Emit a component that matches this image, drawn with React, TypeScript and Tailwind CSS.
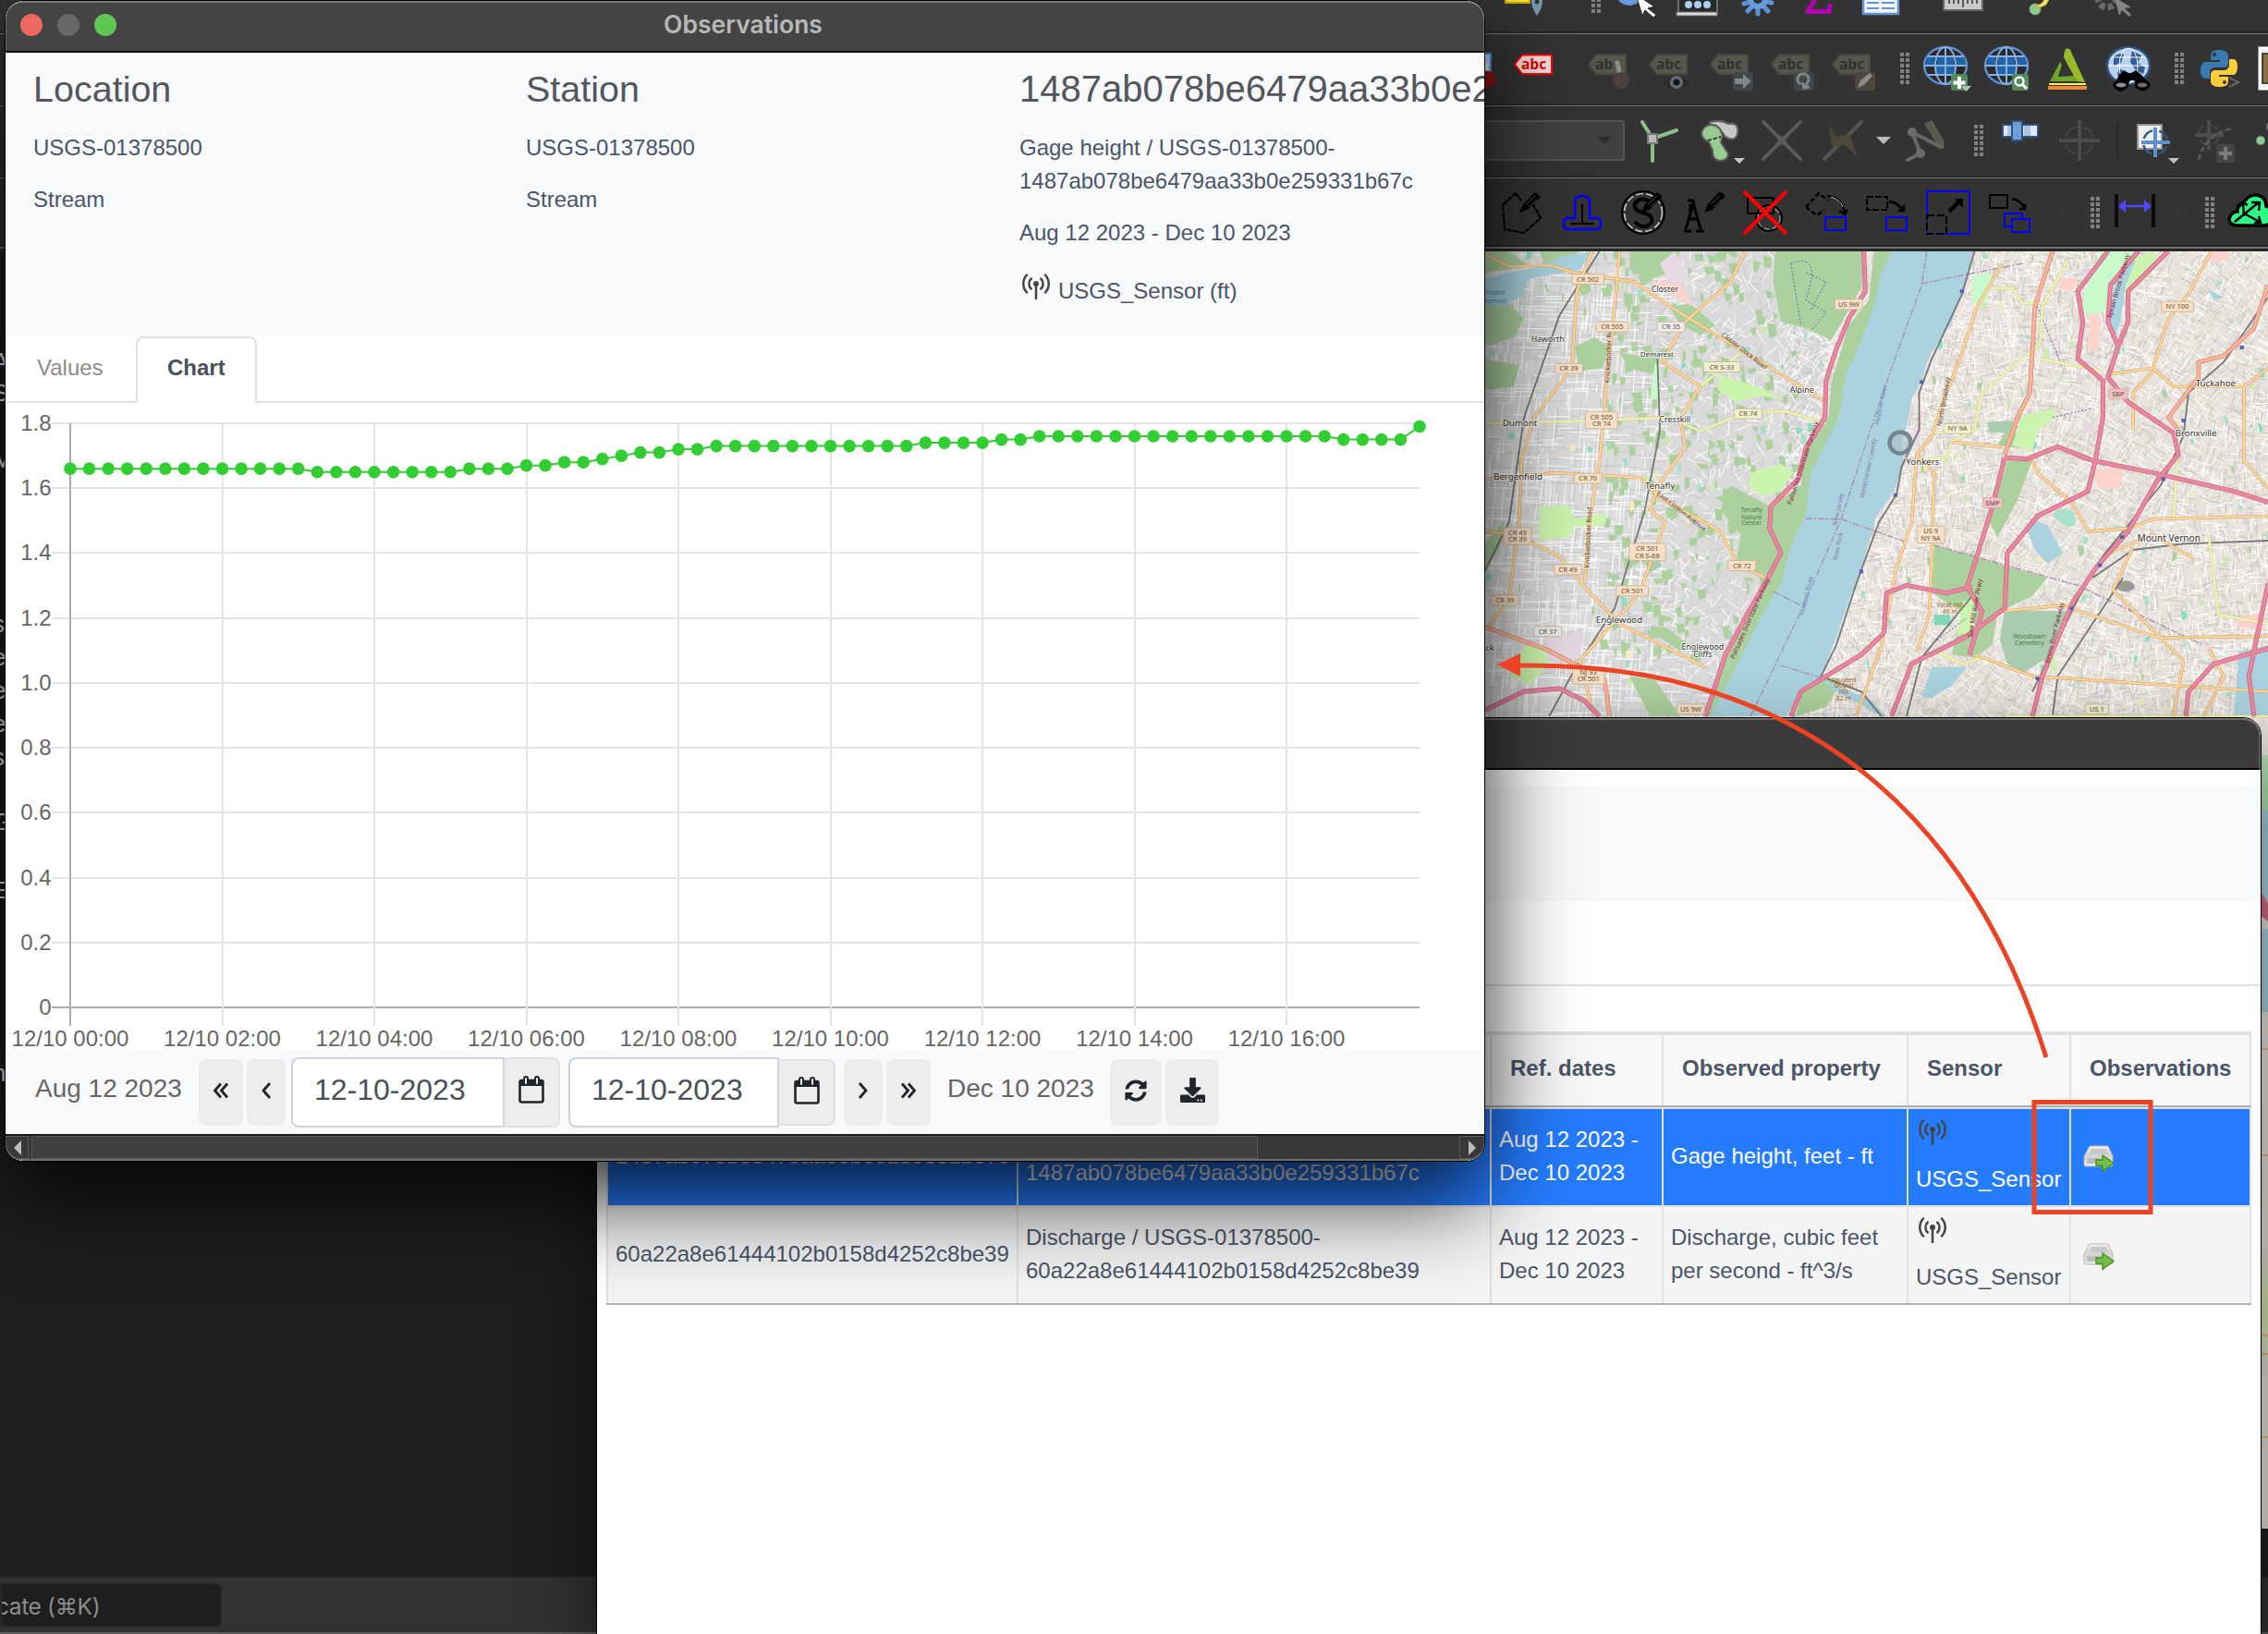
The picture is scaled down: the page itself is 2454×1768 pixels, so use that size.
import React from "react";
import { FaDownload, FaSyncAlt } from "react-icons/fa";

type Kids = { children?: React.ReactNode };

/* ---------- shared bits ---------- */

function Antenna({ className = "" }: { className?: string }) {
  return (
    <svg viewBox="0 0 30 28" className={`h-7 w-[30px] shrink-0 ${className}`} fill="none" stroke="#454545" strokeWidth="2.5" strokeLinecap="round">
      <circle cx="15" cy="11" r="3" fill="#454545" stroke="none" />
      <path d="M15 12v15" />
      <path d="M9.8 5.5a7.5 7.5 0 0 0 0 11M20.2 5.5a7.5 7.5 0 0 1 0 11" />
      <path d="M5 1.5a14 14 0 0 0 0 19M25 1.5a14 14 0 0 1 0 19" />
    </svg>
  );
}

function Drive() {
  return (
    <svg viewBox="0 0 32 28" className="h-7 w-8 overflow-visible">
      <defs>
        <linearGradient id="drv" x1="0" y1="0" x2="0" y2="1">
          <stop offset="0" stopColor="#f4f4f4" />
          <stop offset=".5" stopColor="#d2d2d2" />
          <stop offset="1" stopColor="#f0f0f0" />
        </linearGradient>
      </defs>
      <path d="M6 1h20l5 11v9q0 2-2 2H2q-2 0-2-2v-9z" fill="url(#drv)" stroke="#b5b5b5" strokeWidth="1" />
      <path d="M8 4h16l3 6H5z" fill="#c9c9c9" />
      <path d="M3 14h25v6H3z" fill="#bdbdbd" />
      <path d="M13 16h7v-5l12 8.500-12 9v-6h-7z" fill="#74bd48" stroke="#43901f" strokeWidth="1.300" />
    </svg>
  );
}

/* ---------- toolbars ---------- */

function Icon({ children, className = "ml-[18px]" }: Kids & { className?: string }) {
  return (
    <svg viewBox="0 0 48 48" fill="none" className={`h-12 w-12 shrink-0 overflow-visible ${className}`}>
      {children}
    </svg>
  );
}

function Handle({ className = "" }: { className?: string }) {
  return (
    <div className={`grid shrink-0 grid-cols-2 gap-x-0.5 gap-y-0.5 ${className}`}>
      {Array.from({ length: 12 }, (_, i) => (
        <div key={i} className="h-1 w-1 bg-[#808080]" />
      ))}
    </div>
  );
}

function Tag({ tone = "dim", text = "abc" }: { tone?: "dim" | "red"; text?: string }) {
  const red = tone === "red";
  return (
    <>
      <path d="M2 19.500 10 9.500H42V30H10z" fill={red ? "#f8dcdc" : "#55564d"} stroke={red ? "#f00" : "#4b4a3d"} strokeWidth="2" />
      <text x="9" y="25" fontSize="15.500" fontWeight="700" fontFamily="Open Sans, sans-serif" fill={red ? "#e00000" : "#313131"}>
        {text}
      </text>
    </>
  );
}

function Globe() {
  return (
    <>
      <ellipse cx="24" cy="21" rx="23" ry="20" fill="#2a2a2c" stroke="#5b8fd0" strokeWidth="2.500" />
      <path d="M15 12h18v9H15zM4 12h8v9H3zM36 12h8l2 9H36zM14 22h20v9H14z" fill="#2065a8" />
      <ellipse cx="24" cy="21" rx="11" ry="20" stroke="#8aaede" strokeWidth="2" />
      <path d="M24 1v40M1 21h46M5 11h38M5 31h38" stroke="#8aaede" strokeWidth="2" />
    </>
  );
}

function Pencil() {
  return (
    <>
      <path d="m22 24 4-9L39 2l6 5-14 14z" fill="#000" />
      <path d="m29 15 10-9M32 18l9-8" stroke="#333" strokeWidth="1.200" />
    </>
  );
}

const Badge = ({ fill, children }: Kids & { fill: string }) => (
  <>
    <rect x="30" y="30" width="18" height="18" rx="3" fill={fill} />
    {children}
  </>
);

const rowBase = "flex shrink-0 border-t-[1px] border-[#767676] bg-[#333333] shadow-[inset_0_-2px_0_#262626]";

function Toolbars() {
  return (
    <div className="flex h-[272px] flex-col overflow-hidden bg-[#333333]">
      <div className="flex h-9 shrink-0 items-start overflow-hidden pl-[1622px] shadow-[inset_0_-2px_0_#262626]">
        <Icon className="-mt-[30px]">
          <path d="M7 10h26v23H7z" fill="#f7e23a" stroke="#d1a900" strokeWidth="2" />
          <path d="M41 47q-6-9-6-15a6 6 0 0 1 12 0q0 6-6 15z" fill="#7299ad" />
          <circle cx="41" cy="32" r="2.500" fill="#333" />
        </Icon>
        <Handle className="-mt-5 ml-[52px]" />
        <Icon className="-mt-[30px] ml-[18px]">
          <circle cx="13" cy="21" r="15" fill="#6a9bd8" />
          <path d="m20 24 20 13-7 2 9 7-3 3-9-8-3 6z" fill="#fff" stroke="#222" strokeWidth="1" />
        </Icon>
        <Icon className="-mt-[30px] ml-[14px]">
          <path d="M4 20h42v24H4z" fill="#292929" stroke="#6c6c6c" strokeWidth="2" />
          <path d="M2 43h44v4H2z" fill="#d8d8d8" stroke="#666" />
          <g fill="#a7d2ee"><circle cx="15" cy="35" r="4" /><circle cx="25" cy="35" r="4" /><circle cx="35" cy="35" r="4" /></g>
        </Icon>
        <Icon className="-mt-[30px] ml-[18px]">
          <g stroke="#5d94d6" strokeWidth="5" strokeLinecap="round"><path d="M24 30v15M24 30l11 12M24 30 13 42M24 30l15 3M24 30 9 34" /></g>
          <circle cx="24" cy="29" r="11" fill="#6a9cdb" /><circle cx="24" cy="29" r="5" fill="#333" />
        </Icon>
        <Icon className="-mt-[30px] ml-[18px]">
          <path d="M30 18 16 40h17l1-6h5l-2 11H10l-1-3 16-24z" fill="#b100b1" />
        </Icon>
        <Icon className="-mt-[30px] ml-[18px]">
          <path d="M6 12h38v33H6z" fill="#f3f3f3" stroke="#5f95d5" strokeWidth="2.500" />
          <path d="M10 26h13M26 26h14M10 33h13M26 33h14M10 39h13M26 39h14" stroke="#5f95d5" strokeWidth="2" />
        </Icon>
        <Icon className="-mt-[30px] ml-[42px]">
          <path d="M3 14h42v27H3z" fill="#c9c9c9" stroke="#666" strokeWidth="2" />
          <path d="M9 28v6M14 28v6M19 28v6M24 24v14M29 28v6M34 28v6M39 28v6" stroke="#333" strokeWidth="1.500" />
        </Icon>
        <Icon className="-mt-[30px] ml-[30px]">
          <circle cx="24" cy="40" r="6.500" fill="#8fc98f" stroke="#4e4e4e" /><path d="M26 36q10-3 8-12l5 2q0 12-13 12z" fill="#f4e27a" stroke="#cba900" />
        </Icon>
        <Icon className="-mt-[30px] ml-[34px]">
          <circle cx="20" cy="28" r="10" fill="#333" stroke="#686868" strokeWidth="7" strokeDasharray="6 3" />
          <path d="m28 27 18 11-7 1 7 7-2 2-8-7-3 6z" fill="#858585" />
        </Icon>
      </div>

      <div className={`${rowBase} h-[78px] items-center pb-[3px] pl-[1571px]`}>
        <Icon className="ml-0">
          <path d="M4 8h38v20H4z" fill="#a9c9ee" stroke="#4a83c8" strokeWidth="2" />
          <path d="M37 17v16" stroke="#ddd" strokeWidth="4" /><circle cx="38" cy="36" r="9.500" fill="#8d1518" />
        </Icon>
        <Icon><Tag tone="red" /></Icon>
        <div className="ml-[18px] h-[38px] w-0.5 bg-[#292929]" />
        <Icon className="ml-[14px]">
          <Tag text="ab" />
          <path d="m33 18 3 13" stroke="#8b8b8b" strokeWidth="5" strokeLinecap="round" /><circle cx="37" cy="37" r="9" fill="#4d4040" />
        </Icon>
        <Icon>
          <Tag /><path d="M17 40q14-14 28 0-14 12-28 0z" fill="#2b2b2b" stroke="#252525" />
          <circle cx="31" cy="39" r="7" fill="#666b74" /><circle cx="31" cy="39" r="3.500" fill="#151515" />
        </Icon>
        <Icon><Tag /><rect x="26" y="28" width="22" height="20" rx="4" fill="#41464a" /><path d="M28 35h9v-5l9 8-9 8v-5h-9z" fill="#858585" /></Icon>
        <Icon><Tag /><rect x="26" y="28" width="22" height="20" rx="4" fill="#41464a" /><path d="M33 41a6 6 0 1 1 8-2l-4 6m-2-6 2 6 6-1" stroke="#858585" strokeWidth="3" /></Icon>
        <Icon><Tag /><rect x="26" y="28" width="22" height="20" rx="4" fill="#4b473b" /><path d="m29 45 3-8 10-8 3 3-9 10z" fill="#8a8a8a" /></Icon>
        <Handle className="ml-[27px]" />
        <Icon className="ml-[15px]">
          <Globe /><Badge fill="#528b59"><path d="M39 33v13M32.500 39.500h13" stroke="#fff" strokeWidth="4" /></Badge>
          <path d="M41 43h11l-5.500 6z" fill="#bbb" />
        </Icon>
        <Icon>
          <Globe /><Badge fill="#528b59"><circle cx="38" cy="38" r="4.500" stroke="#fff" strokeWidth="2.500" /><path d="m41 41 5 5" stroke="#fff" strokeWidth="3" /></Badge>
        </Icon>
        <Icon>
          <path d="M22 3q3-2 5 1l16 35-9-1L20 12q0-5 2-9z" fill="#9bb82a" />
          <path d="M5 38 16 17l2 3-4 13 17-1 4 6z" fill="#6da62a" />
          <path d="M4 40h40v2H4z" fill="#f5f06a" /><path d="M3 43h42v4H3z" fill="#f08a32" />
        </Icon>
        <Icon>
          <ellipse cx="24" cy="21" rx="23" ry="20" fill="#b9d1ee" stroke="#2c5282" strokeWidth="2.500" />
          <path d="M8 12q6-6 11-3l-3 9-8 3zM28 5l10 5-4 8 8 5-2 7-8-4-6-9zM14 24l7 4-3 10-6-7z" fill="#2e5c93" />
          <ellipse cx="24" cy="21" rx="10" ry="19" stroke="#fff" /><path d="M2 21h44M6 12h36" stroke="#fff" />
          <path d="m14 31 5-5 5 3h3l5-3 6 5 8 9a6 6 0 0 1-12 4l-4-7h-4l-4 7a6 6 0 0 1-13-4z" fill="#000" />
          <ellipse cx="16" cy="42" rx="7" ry="4" fill="#8b9199" stroke="#000" strokeWidth="3" /><ellipse cx="39" cy="42" rx="7" ry="4" fill="#6f6f6f" stroke="#000" strokeWidth="3" />
        </Icon>
        <Handle className="ml-[26px]" />
        <Icon className="ml-[15px]">
          <path d="M23 4c-9 0-9 4-9 7v4h10v2H9c-5 0-6 6-6 9s1 9 6 9h4v-6c0-4 3-6 6-6h9c3 0 5-2 5-5v-7c0-5-4-7-10-7z" fill="#3b7ab1" />
          <path d="M24 44c9 0 9-4 9-7v-4H23v-2h15c4 0 5-5 5-9s-1-8-5-8h-4v6c0 4-3 6-6 6h-9c-3 0-5 2-5 5v7c0 4 4 6 10 6z" fill="#fbcf3b" />
          <circle cx="18" cy="9" r="2" fill="#333" /><circle cx="29" cy="39" r="2" fill="#333" />
          <path d="m34 34 10 5-10 5" stroke="#666" strokeWidth="2" />
        </Icon>
        <Icon className="ml-[17px]"><path d="M2 2h40v44H2z" fill="#eee" stroke="#fff" strokeWidth="3" /><path d="M5 8h14v32H5z" fill="#8b7342" stroke="#222" strokeWidth="1.500" /></Icon>
      </div>

      <div className={`${rowBase} h-[78px] items-center pb-[3px]`}>
        <div className="ml-[1400px] flex h-11 w-[358px] shrink-0 items-center justify-end rounded border-2 border-[#555] bg-[#404040] pr-3">
          <div className="h-0 w-0 border-x-8 border-t-8 border-x-transparent border-t-[#2b2b2b]" />
        </div>
        <Icon className="ml-[14px]">
          <path d="M5 4 16 22 42 13M16 22v24" stroke="#8bbf8d" strokeWidth="4" strokeLinecap="round" /><path d="M11 17h10v10H11z" fill="#b9b9b9" stroke="#777" strokeWidth="2" />
        </Icon>
        <Icon>
          <path d="M12 4q12-3 20 2c9-1 11 2 10 11q-3 9-13 3-5-8-17-14z" fill="#c6c6c6" stroke="#5f5f5f" strokeWidth="2" />
          <path d="M3 16q2-9 11-9t12 12l-2 7 8 12q0 8-9 8-9-1-8-11l-4-9Q3 22 3 16z" fill="#96cb92" stroke="#555" strokeWidth="2" />
          <path d="m10 24 14-4" stroke="#333" strokeWidth="2" strokeDasharray="4 2" /><path d="M38 43h12l-6 6z" fill="#c4c4c4" />
        </Icon>
        <Icon><path d="m4 4 40 40M44 4 4 44" stroke="#585a58" strokeWidth="4" strokeLinecap="round" /><circle cx="24" cy="24" r="4" fill="#555" stroke="#666" /></Icon>
        <Icon><path d="M44 4 4 44" stroke="#535553" strokeWidth="4" strokeLinecap="round" /><path d="m8 6 9 14 14-3 9 25-14-13-13 2z" fill="#4d4737" /></Icon>
        <div className="ml-3 h-0 w-0 shrink-0 border-x-8 border-t-8 border-x-transparent border-t-[#bbb]" />
        <Icon className="ml-3">
          <path d="m6 45 14-7-9-23 31 16" stroke="#666" strokeWidth="4" strokeLinecap="round" /><circle cx="11" cy="15" r="5" fill="#6c6c6c" /><circle cx="20" cy="38" r="5" fill="#6c6c6c" />
          <path d="m25 6 7-3 12 20 1 9-7-5z" fill="#5b594c" stroke="#6b6b5e" />
        </Icon>
        <Handle className="ml-[30px]" />
        <Icon className="ml-4">
          <path d="M5 7h14v13H5zM23 7h20v13H23z" fill="#e0e9f4" stroke="#2e5583" strokeWidth="2" /><path d="M10 8h5v11h-5zM28 8h7v11h-7z" fill="#a9c4e4" />
          <path d="M15 3h11v21H15z" fill="#6e9fd5" stroke="#2e5583" strokeWidth="2" /><path d="M19 24v6" stroke="#23456c" strokeWidth="2" />
        </Icon>
        <Icon className="ml-4">
          <path d="M24 2v44M2 24h44" stroke="#4a4c4e" strokeWidth="4" /><circle cx="24" cy="24" r="15" stroke="#444" strokeWidth="2" strokeDasharray="16 7.500" strokeDashoffset="-4" /><circle cx="24" cy="24" r="9" stroke="#404040" strokeDasharray="8 6" />
        </Icon>
        <div className="ml-[16px] h-[38px] w-0.5 shrink-0 bg-[#292929]" />
        <Icon className="ml-4">
          <path d="M5 7h26v26H5z" fill="#eee" stroke="#909590" strokeWidth="2" /><path d="M24 10v32M9 26h31" stroke="#5c91cc" strokeWidth="4" />
          <circle cx="24" cy="26" r="13" stroke="#35587f" strokeWidth="2.500" strokeDasharray="13 7.400" strokeDashoffset="-4" /><path d="M38 43h12l-6 6z" fill="#c4c4c4" />
        </Icon>
        <Icon>
          <path d="M16 2v32M1 18h31" stroke="#4a4c4e" strokeWidth="4" /><circle cx="16" cy="18" r="11" stroke="#484848" strokeWidth="2" strokeDasharray="12 5" /><path d="M5 45Q10 20 40 11" stroke="#5b5b5b" strokeWidth="2.500" strokeDasharray="6 3" />
          <rect x="24" y="28" width="20" height="20" rx="3" fill="#454745" /><path d="M34 31v14M27 38h14" stroke="#7b7b7b" strokeWidth="4" />
        </Icon>
        <Icon><circle cx="6" cy="24" r="5" fill="#8fc98f" stroke="#555" /><circle cx="18" cy="9" r="6" fill="#777" /></Icon>
      </div>

      <div className={`${rowBase} h-[75px] items-center pl-[1604px]`}>
        <Icon><path d="m4 16 14-13M4 16l2 26 21 4 18-16-9-16M18 3l6 8" stroke="#000" strokeWidth="2.200" strokeDasharray="6 1" /><Pencil /></Icon>
        <Icon><path d="M8 30h8V12q0-6 8-6t8 6v18h8q4 0 4 6t-4 6H8q-4 0-4-6t4-6z" stroke="#0000fb" strokeWidth="2.500" /><path d="M24 15v21M12 36h24" stroke="#000" strokeWidth="2" /></Icon>
        <Icon>
          <circle cx="24" cy="24" r="23" stroke="#000" strokeWidth="2.200" /><circle cx="24" cy="24" r="20.500" stroke="#c8c8c8" strokeWidth="1.600" strokeDasharray="8 3" />
          <path d="M34 14Q22 5 15 14q-2 8 9 10 12 4 9 11-8 9-18-1" stroke="#000" strokeWidth="4" /><Pencil />
        </Icon>
        <Icon><path d="M6 11h6v4L4 42M12 13l8 29M8 31h9M2 44h8M15 44h9M9 15v12" stroke="#000" strokeWidth="3" /><path d="m24 24 4-9L41 1l6 5-14 15z" fill="#000" /><path d="m31 15 10-9M34 18l9-8" stroke="#333" strokeWidth="1.200" /></Icon>
        <Icon><path d="M5 8h28v17H5z" stroke="#000" strokeWidth="2" /><circle cx="28" cy="30" r="14" stroke="#000" strokeWidth="2" /><circle cx="28" cy="30" r="12" stroke="#999" strokeWidth="1.200" strokeDasharray="6 3" /><path d="m1 1 46 46M47 1 1 47" stroke="#f00" strokeWidth="4" /></Icon>
        <Icon><path d="M2 18 16 3l10 8M2 18l12 9 8-6" stroke="#000" strokeWidth="2.500" strokeDasharray="5 3" /><path d="M25 6q16 1 19 19m-6-3 6 4 3-5" stroke="#000" strokeWidth="2.500" /><path d="M29 7q10 3 13 11" stroke="#ccc" strokeWidth="1" /><path d="M23 29h22v14H23z" stroke="#00f" strokeWidth="2" /></Icon>
        <Icon><path d="M2 7h22v14H2z" stroke="#000" strokeWidth="2" strokeDasharray="7 2" /><path d="M26 12q10 1 16 11m-6-1h6v-6" stroke="#000" strokeWidth="2.500" /><path d="M23 29h22v14H23z" stroke="#00f" strokeWidth="2" /></Icon>
        <Icon><path d="M1 1h46v46H1z" stroke="#00f" strokeWidth="2" /><path d="M1 27h21v20H1z" fill="#333" stroke="#000" strokeWidth="2" strokeDasharray="8 3" /><path d="m25 23 12-12" stroke="#000" strokeWidth="4.500" /><path d="M31 9h9v10z" fill="#000" /></Icon>
        <Icon><path d="M3 5h19v14H3z" stroke="#000" strokeWidth="2" /><path d="M27 9q8 1 14 10m-6 1h6v-5" stroke="#000" strokeWidth="2.500" /><path d="M19 25h19v14H19z" stroke="#00f" strokeWidth="2" /><path d="M27 31h19v14H27z" fill="#333" stroke="#00f" strokeWidth="2" /></Icon>
        <svg viewBox="0 0 14 12" className="ml-[30px] h-3 w-[14px] shrink-0" fill="none" stroke="#414141"><path d="m1 1 5 5-5 5M8 1l5 5-5 5" /></svg>
        <Handle className="ml-5" />
        <Icon className="ml-[14px]"><path d="M4 4v36M44 4v36" stroke="#0b0b0b" strokeWidth="4" /><path d="M8 17h32" stroke="#4a4af8" strokeWidth="2.500" /><path d="m6 17 8-7v14zM42 17l-8-7v14z" fill="#4a4af8" /></Icon>
        <svg viewBox="0 0 14 12" className="ml-[19px] h-3 w-[14px] shrink-0" fill="none" stroke="#414141"><path d="m1 1 5 5-5 5M8 1l5 5-5 5" /></svg>
        <Handle className="ml-[19px]" />
        <Icon className="ml-[14px]"><path d="M9 38q-9-2-6-10 3-5 8-5 0-9 7-10 5-9 14-8 10 2 10 12 8 3 7 12-1 7-8 9z" fill="#2bfb82" stroke="#000" strokeWidth="3.500" /><path d="m8 34 26-21m-8 0h9l-1 9M18 28l-1-15m-4 5 4-5 5 3M20 26l15 8m-6 1h7l-2-7" stroke="#000" strokeWidth="2.500" /></Icon>
      </div>
      <div className="h-1 shrink-0 border-t-2 border-[#6f6f6f] bg-[#262626]" />
    </div>
  );
}

/* ---------- map ---------- */

const KX = 1 / 1.836;
const KY = 1 / 3;

function makeStreets() {
  let s = 7;
  const r = () => ((s = (s * 16807) % 2147483647) / 2147483647);
  let west = "";
  let westGrey = "";
  let east = "";
  let eastGrey = "";
  for (let i = 0; i < 3000; i++) {
    const x = r() * 400;
    const y = r() * 520;
    const hilly = x > 190 && y < 480;
    const l = hilly ? 6 + r() * 14 : 8 + r() * 34;
    const a = (r() < 0.5 ? 0.02 : 1.66) + (hilly ? (r() - 0.5) * 2.2 : (r() - 0.5) * 0.08);
    const seg = `M${x.toFixed(1)} ${y.toFixed(1)}l${(Math.cos(a) * l).toFixed(1)} ${(Math.sin(a) * l).toFixed(1)}`;
    if (i % 2) west += seg;
    else westGrey += seg;
  }
  for (let i = 0; i < 11000; i++) {
    const x = 330 + r() * 524;
    const y = r() * 520;
    const l = 4 + r() * 12;
    const a = (r() < 0.5 ? 0.3 : 1.85) + (r() - 0.5) * 0.7 + Math.sin(x / 60 + y / 90) * 0.4;
    const seg = `M${x.toFixed(1)} ${y.toFixed(1)}l${(Math.cos(a) * l).toFixed(1)} ${(Math.sin(a) * l).toFixed(1)}`;
    if (i % 2) east += seg;
    else eastGrey += seg;
  }
  return { west, westGrey, east, eastGrey };
}
const streets = makeStreets();

function makePatches() {
  let s = 91;
  const r = () => ((s = (s * 16807) % 2147483647) / 2147483647);
  return Array.from({ length: 620 }, (_, i) => {
    const wooded = i % 2 === 0;
    const x = wooded ? 130 + r() * 210 : r() * 854;
    const y = r() * (wooded ? 440 : 520);
    const w = 2 + r() * (wooded ? 9 : 5);
    const h = 3 + r() * (wooded ? 9 : 5);
    const fill = wooded ? "#add19e" : ["#add19e", "#aadfc8", "#f3eec2", "#dfd3e2", "#cdebb0", "#8fdcc0"][Math.floor(r() * 6)];
    return { d: `M${x.toFixed(1)} ${y.toFixed(1)}l${w.toFixed(1)} ${(r() * 5 - 2).toFixed(1)}l${(r() * 4 - 2).toFixed(1)} ${h.toFixed(1)}l${(-w * 0.8).toFixed(1)} ${(r() * 4).toFixed(1)}z`, fill };
  });
}
const patches = makePatches();

const greens: [string, string][] = [
  ["#add19e", "M300 20H400L380 90 340 110 300 80zM590 20H765L760 140 700 310 650 270 600 250 585 120zM12 170 60 190 90 240 70 300 12 330zM12 20 60 20 100 70 12 90zM12 370 80 390 70 460 12 470zM120 20 200 20 180 60 130 60z"],
  ["#add19e", "M820 20 785 20 775 180 735 260 700 450 695 560 650 640 640 780 580 850 500 780 480 860 520 940 510 1050 575 1070 540 1190 490 1330 450 1530 480 1530 540 1330 610 1100 650 880 665 740 700 640 725 500 760 320 800 200 825 100z"],
  ["#add19e", "M905 975 1130 1080 1100 1140 1060 1170 1030 1200 1020 1300 985 1340 940 1330 960 1190 900 1130zM1050 700 1100 700 1070 830 1030 950 1015 900zM1060 570 1075 660 1030 650zM680 1400 720 1420 690 1500 630 1530 640 1460zM280 350 360 370 350 420 300 400z"],
  ["#add19e", "M190 330 230 300 260 330 245 400 200 410zM190 120 215 100 225 150 205 165zM40 990 12 1050 12 970 50 900zM380 200 420 190 470 260 440 290 400 260zM470 820 510 800 500 850zM340 1250 370 1240 420 1300 400 1320zM300 1400 350 1410 400 1530 340 1530z"],
  ["#cdf4ae", "M480 420 570 470 600 500 560 490 510 510 475 470zM540 740 600 710 625 740 600 800 560 815 535 780zM120 850 180 845 190 890 255 870 250 910 190 915 180 950 120 960zM1080 555 1150 530 1140 570 1110 600 1100 670 1060 650zM1290 50 1340 20 1350 60 1320 120 1280 160zM960 1160 985 1140 985 1250 950 1270zM90 1300 130 1310 140 1360 100 1430 60 1400zM1110 1330 1140 1280 1150 1400z"],
  ["#c8facc", "M1235 20H1305L1290 100 1240 220 1195 225 1210 120zM350 380 360 400 355 500 340 500zM980 100 1020 90 1010 180 980 190z"],
  ["#aacbaf", "M1045 1185 1175 1190 1130 1340 1080 1390 1050 1360 1035 1280zM330 1030 350 1010 365 1040 340 1065zM1010 575 1060 570 1050 610 1015 610z"],
  ["#ffd2cb", "M1150 110 1190 105 1180 150 1155 145zM1215 220 1235 240 1230 350 1210 330zM1225 730 1280 720 1275 790 1230 790zM1500 1215 1560 1190 1560 1250 1510 1240zM340 120 400 120 425 200 370 150zM1450 20H1490V50H1450z"],
  ["#e8d8e4", "M130 1260 210 1260 200 1340 140 1340zM790 820 810 820 800 890 785 880zM360 60 390 20 420 120 380 130zM860 590 880 590 875 650 860 640zM1200 580 1225 570 1220 610 1200 610z"],
];

const waters = [
  "M820 20 800 90 785 200 755 330 730 420 715 560 690 640 660 740 650 870 620 980 600 1100 560 1210 520 1340 460 1530 610 1530 630 1480 680 1400 700 1320 730 1180 760 1050 780 940 790 880 825 800 845 710 840 640 850 590 860 500 880 440 895 360 940 250 960 150 985 20z",
  "M12 110 60 90 110 75 160 40 230 20 200 80 150 95 100 110 80 170 50 200 12 195z",
  "M1100 890 1130 910 1160 1000 1130 1035 1105 990 1090 930z",
  "M1305 50 1285 130 1275 250 1260 310 1250 250 1265 110 1290 50z",
  "M900 1370 970 1370 940 1430 900 1470 880 1470zM680 1410 780 1480 810 1530 800 1530 700 1440zM1510 1320 1568 1300V1530H1500zM1450 145 1480 170 1460 180z",
];

const orange = [
  "M12 30 60 70 140 65 190 90 310 120 380 200 500 320 650 470 690 510",
  "M280 20 270 200 255 420 240 700 220 900 210 1100",
  "M225 20 195 150 185 400 110 560 85 700 80 900 60 1150 20 1240",
  "M530 20 500 120 410 250 365 380 440 460 400 560 410 660 360 770 340 860 370 900 320 1130 200 1350 230 1530",
  "M12 760 150 740 320 755 360 820 480 930 515 1040 570 1080",
  "M12 930 70 940 160 1010 210 1110 280 1230 450 1370",
  "M1040 60 990 200 960 350 925 500 900 620 870 680 860 900 830 1050 800 1300 750 1530",
  "M870 680 905 740 900 1000 895 1200 870 1320",
  "M1455 20 1410 160 1370 240 1340 400 1250 420M1100 700 1110 740 1180 840 1210 930 1290 920 1340 890 1568 880",
  "M1340 400 1380 460 1520 460 1568 400M1300 600 1300 480 1340 410M1520 460 1520 700 1568 790",
  "M1035 1190 1160 1170 1350 1275 1568 1270M1300 980 1260 1120 1400 1350 1380 1530M985 1330 1100 1400 1568 1450M1450 1310 1480 1400 1440 1530",
  "M940 640 1040 655M1250 1000 1340 940 1420 1020",
];
const coral = ["M1140 20 1105 200 1095 480 1070 560 1045 680", "M1568 130 1540 270 1480 360 1430 380 1430 430 1370 560 1390 600", "M12 1240 130 1310 250 1410 260 1530"];
const yellow = ["M12 580 240 570 380 560 440 605 520 550 610 540 690 580", "M520 350 440 460", "M1170 50 1120 200 1115 320 1000 480 985 600 900 610M1115 370 1240 410M985 600 940 640 930 690 870 700", "M1020 140 1060 140 1080 190 1120 190M1390 640 1380 900M1050 1530H1568M1450 940 1470 1200 1568 1230M910 1320 960 1360 1000 1340"];
const pink = [
  "M765 20 768 150 735 240 710 340 690 440 688 560 650 660 635 760 580 850 578 920 600 1000 575 1080 530 1210 490 1330 450 1530",
  "M1250 20 1190 150 1200 250 1190 370 1240 440 1240 560 1225 700 1210 800 1110 880 1050 1000 1045 1180 970 1270 860 1360 820 1530",
  "M1310 20 1255 130 1250 250 1270 330 1250 430 1290 510 1380 610 1390 680 1350 760 1290 930 1230 1040 1180 1160 1120 1400 1100 1530",
  "M1370 20 1290 150 1290 250 1270 330",
  "M1045 690 1090 695 1150 655 1220 700 1340 740 1500 800 1568 835",
  "M1045 690 1020 850 990 1010 970 1110 1000 1190 975 1330",
  "M805 1260 810 1130 850 1105 930 1130 980 1110M805 1260 760 1330 640 1450 620 1530",
  "M12 1510 90 1450 160 1440 210 1480 240 1530M1568 1310 1460 1360 1410 1450 1405 1530M1568 1100 1530 1400 1540 1530",
];
const rail = [
  "M240 20 160 230 90 560 60 900 12 1060",
  "M355 370 360 600 330 860 270 1180 190 1380 140 1530",
  "M985 20 960 160 900 370 875 480 875 600 840 720 830 810 795 900 750 1100 710 1300 680 1400",
  "M1568 170 1480 380 1410 480 1400 620 1355 780 1240 1010 1190 1150 1100 1450",
  "M1568 960 1400 970 1300 990 1220 1080M980 1140 880 1340 850 1530M1280 1080 1150 1400 1140 1530M680 1400 760 1450 800 1530",
];

const places: [string, number, number, number?][] = [
  ["Closter", 370, 153], ["Haworth", 137, 315], ["Demarest", 354, 363, 9], ["Alpine", 642, 480], ["Dumont", 82, 588, 11], ["Cresskill", 390, 576],
  ["Bergenfield", 78, 763, 11], ["Tenafly", 360, 792, 11], ["Yonkers", 882, 715, 11], ["Tuckahoe", 1464, 458, 11], ["Bronxville", 1425, 620, 11],
  ["Mount Vernon", 1371, 963, 11.5], ["Englewood", 279, 1226, 11], ["Englewood", 445, 1313], ["Cliffs", 445, 1338], ["ck", 22, 1316],
];
const shields: [string, number, number, string?][] = [
  ["CR 502", 217, 111], ["CR 505", 265, 266], ["CR 35", 382, 266, "#ececec"], ["CR 39", 179, 401], ["CR S-33", 483, 396, "#eef0d0"], ["CR 505|CR 74", 244, 569],
  ["CR 74", 535, 548, "#eef0d0"], ["CR 70", 217, 758], ["CR 49|CR 39", 77, 945], ["CR 501|CR S-68", 335, 997], ["CR 72", 523, 1041], ["CR 49", 177, 1054],
  ["CR 501", 305, 1123], ["CR 39", 52, 1153], ["CR 37", 137, 1255, "#ececec"], ["NJ 93|CR 501", 218, 1398], ["US 9W", 735, 193], ["US 9W", 421, 1507],
  ["NY 9A", 951, 596, "#eef0d0"], ["US 9|NY 9A", 898, 940], ["NY 100", 1388, 200], ["SBP", 1270, 484, "#f0c0cc"], ["SMP", 1021, 837, "#f0c0cc"], ["US 1", 1228, 1507, "#eef0d0"],
];
const tilted: [string, number, number, number, string][] = [
  ["New Jersey", 718, 860, -78, "#8a78a8"], ["New York", 718, 980, -78, "#8a78a8"], ["Westchester County", 778, 725, -78, "#8a78a8"], ["Hudson River", 803, 520, -78, "#6c84ae"],
  ["Palisades Interstate Parkway", 648, 710, -72, "#7a2740"], ["Palisades Interstate Parkway", 543, 1215, -66, "#7a2740"], ["Saw Mill River Pkwy", 990, 1180, -80, "#7a2740"],
  ["Knickerbocker Road", 262, 350, -88, "#5b4630"], ["Knickerbocker Road", 222, 950, -88, "#5b4630"], ["Closter Dock Road", 525, 350, 38, "#5b4630"], ["East Clinton Avenue", 400, 870, 38, "#5b4630"],
  ["Sprain Brook Parkway", 1275, 135, -74, "#7a2740"], ["North Broadway", 928, 510, -80, "#5b4630"], ["Bronx River Parkway", 1148, 1260, -76, "#7a2740"], ["Hudson River", 655, 1140, -76, "#6c84ae"],
];

function Roads({ list, casing, color, width }: { list: string[]; casing?: string; color: string; width: number }) {
  return (
    <>
      {casing && list.map((d, i) => <path key={`c${i}`} d={d} stroke={casing} strokeWidth={width + 1.2} vectorEffect="non-scaling-stroke" />)}
      {list.map((d, i) => <path key={i} d={d} stroke={color} strokeWidth={width} vectorEffect="non-scaling-stroke" />)}
    </>
  );
}

function MapCanvas() {
  return (
    <svg viewBox="0 7 854 1382" className="block h-[1382px] w-[854px]" fontFamily="Noto Sans, sans-serif">
      <rect width="854" height="1389" fill="#dcdbdb" />
      <path d="M400 0H854V1389H300V520z" fill="#e8e3dc" />
      <path d={streets.eastGrey} stroke="#c9c5bf" strokeWidth=".9" />
      <path d={streets.east} stroke="#fff" strokeWidth="1" />
      <path d={streets.westGrey} stroke="#c6c6c6" strokeWidth=".8" />
      <path d={streets.west} stroke="#fafafa" strokeWidth="1.1" />
      {patches.map((p, i) => <path key={i} d={p.d} fill={p.fill} />)}
      <g transform={`scale(${KX} ${KY})`} fill="none" strokeLinejoin="round">
        {greens.map(([c, d], i) => <path key={i} d={d} fill={c} />)}
        {waters.map((d, i) => <path key={i} d={d} fill="#aad3df" />)}
        <path d="M1150 860q30-10 35 25t-15 30q-25-20-30-45z" fill="#aae0cb" />
        <path d="M905 1200h32v34h-32z" fill="#80d8b4" />
        <circle cx="1285" cy="1108" r="18" fill="#9a9a9a" />
        <path d="M890 20 880 130 820 400 770 640 720 890 640 1190 540 1530M650 888 720 890 850 965M905 975 1190 1105 1440 1300M585 1125 640 1170M600 1365 690 1410M880 125 1080 60" stroke="#a88ab5" strokeWidth="1.3" strokeDasharray="7 2 2 2" vectorEffect="non-scaling-stroke" />
        <path d="M620 60q50-30 40 60l-10 60 40 40-30 60M620 60l20 200M650 90l40 30-30 90M1110 200 1160 400M1140 560l80-30M905 1290 970 1210" stroke="#5a67c8" strokeWidth="1" strokeDasharray="2 2" vectorEffect="non-scaling-stroke" />
        <Roads list={rail} color="#777" width={1.8} />
        <Roads list={yellow} casing="#d0d29b" color="#f3f6b4" width={2} />
        <Roads list={orange} casing="#d9a55c" color="#fcd6a4" width={2.2} />
        <Roads list={coral} casing="#cf7d5e" color="#f9b29c" width={3.4} />
        <Roads list={pink} casing="#cd5a76" color="#e688a0" width={3.8} />
        <g fill="#5a62b4">
          {[[960, 150], [880, 445], [828, 812], [760, 1060], [1516, 333], [1400, 570], [1360, 760], [1278, 948], [1234, 1040], [1178, 1180], [1110, 1407]].map(([x, y]) => <path key={y} d={`M${x - 4} ${y - 6}h8v12h-8z`} />)}
        </g>
      </g>
      {tilted.map(([t, x, y, a, c], i) => (
        <text key={i} transform={`translate(${x * KX} ${y * KY}) rotate(${a})`} textAnchor="middle" fontSize="7" fill={c}>{t}</text>
      ))}
      {shields.map(([t, x, y, c], i) => {
        const lines = t.split("|");
        const w = Math.max(...lines.map((l) => l.length)) * 4.6 + 7;
        const h = lines.length * 7.5 + 3.5;
        return (
          <g key={i} transform={`translate(${x * KX} ${y * KY})`}>
            <rect x={-w / 2} y={-h / 2} width={w} height={h} rx="1" fill={c ?? "#f7e0c8"} stroke="#c8b08e" strokeWidth=".8" />
            {lines.map((l, j) => (
              <text key={j} y={(j - (lines.length - 1) / 2) * 7.5 + 2.7} textAnchor="middle" fontSize="7.500" fill="#6b4d30">{l}</text>
            ))}
          </g>
        );
      })}
      {places.map(([t, x, y, s], i) => (
        <text key={i} x={x * KX} y={y * KY} textAnchor="middle" fontSize={(s ?? 10) * 0.88} fill="#333" stroke="#fff" strokeOpacity=".7" strokeWidth="2" paintOrder="stroke">{t}</text>
      ))}
      <g textAnchor="middle" fontSize="7" fill="#4c7a4c">
        <text x={542 * KX} y={868 * KY}>Tenafly</text><text x={542 * KX} y={890 * KY}>Nature</text><text x={542 * KX} y={910 * KY}>Center</text>
        <text x={1094 * KX} y={1277 * KY}>Woodlawn</text><text x={1094 * KX} y={1298 * KY}>Cemetery</text>
        <text x={936 * KX} y={1176 * KY} fill="#a0692a">Vault Hill</text><text x={936 * KX} y={1196 * KY} fill="#a0692a">46 m</text>
        <text x={725 * KX} y={1418 * KY} fill="#a0692a">Spuyten</text><text x={725 * KX} y={1438 * KY} fill="#a0692a">Duyvil</text><text x={725 * KX} y={1458 * KY} fill="#a0692a">Hill</text><text x={725 * KX} y={1480 * KY} fill="#a0692a">62 m</text>
        <text x={30 * KX} y={162 * KY} fill="#4f86b8" fontStyle="italic">Oradell</text><text x={30 * KX} y={188 * KY} fill="#4f86b8" fontStyle="italic">Reservoir</text>
      </g>
      <circle cx="456" cy="214" r="11.500" fill="#a9c0cb" fillOpacity=".6" stroke="#75868e" strokeWidth="4.500" />
      <g>
        <path d="M846 560h8v150h-8z" fill="#aad3df" /><path d="M846 700l8 12v20l-8-6z" fill="#dc6d88" /><path d="M846 740h8v90h-8z" fill="#aad3df" />
        <path d="M846 552h8v60h-8z" fill="#b6e3b5" /><path d="M850 1090l4 60-4 70-4-60z" fill="#d9ecae" />
        <path d="M846 870h8M846 985h8M846 1180h8M846 1200h8M846 1290h8" stroke="#f0b98a" strokeWidth="2" />
      </g>
    </svg>
  );
}

/* ---------- stations window ---------- */

const cols = "grid grid-cols-[444px_512px_186px_265px_176px_197px]";
const cell = "border-l-2 border-[#dee2e6] pl-2";

function StationRow({ id, name, prop, selected }: { id: string; name: string[]; prop: string[]; selected?: boolean }) {
  return (
    <div className={selected ? `${cols} h-[106px] border-b-2 border-[#dee2e6] bg-[#257cff] text-white` : `${cols} h-[106px] border-b-2 border-[#b2b2b4] bg-[#f4f4f4] text-[#4a5568]`}>
      <div className={`${cell} flex items-center pb-[3px]`}>{id}</div>
      <div className={`${cell} flex flex-col justify-center pb-[3px]`}>{name.map((t) => <div key={t}>{t}</div>)}</div>
      <div className={`${cell} flex flex-col justify-center pb-[3px]`}><div>Aug 12 2023 -</div><div>Dec 10 2023</div></div>
      <div className={`${cell} flex flex-col justify-center pb-[3px]`}>{prop.map((t) => <div key={t}>{t}</div>)}</div>
      <div className={`${cell} flex flex-col pt-[11px]`}><Antenna className="ml-[3px]" /><div className="mt-[19px]">USGS_Sensor</div></div>
      <div className="flex items-center border-x-2 border-[#dee2e6] pl-[14px] pt-0.5"><Drive /></div>
    </div>
  );
}

function StationsWindow() {
  return (
    <div className="absolute left-[645px] top-[776px] flex h-[1010px] w-[1802px] flex-col overflow-hidden rounded-t-[20px] border border-black bg-white shadow-[0_36px_80px_rgba(0,0,0,0.55)]">
      <div className="h-[56px] shrink-0 rounded-t-[19px] border-x-2 border-t-2 border-b-2 border-x-[#5d5d5d] border-t-[#6c6c6c] border-b-black bg-[#3b3b3b]" />
      <div className="mt-[18px] h-[124px] shrink-0 bg-[#f8f9fb]" />
      <div className="h-[92px] shrink-0 border-b-2 border-[#dee2e6]" />
      <div className="ml-[10px] mt-[49px] w-[1780px] text-2xl leading-9">
        <div className={`${cols} h-[84px] border-t-4 border-[#dee2e6] bg-[#f8f8f8] font-bold text-[#4a5568] shadow-[inset_0_-2px_0_#dee2e6,inset_0_-4px_0_#b0b0b0]`}>
          {["", "", "Ref. dates", "Observed property", "Sensor", "Observations"].map((t, i) => (
            <div key={i} className="mb-1 flex items-center border-l-2 border-[#dee2e6] pb-1 pl-5 last:border-r-2">{t}</div>
          ))}
        </div>
        <StationRow selected id="1487ab078be6479aa33b0e259331b67c" name={["Gage height / USGS-01378500-", "1487ab078be6479aa33b0e259331b67c"]} prop={["Gage height, feet - ft"]} />
        <StationRow id="60a22a8e61444102b0158d4252c8be39" name={["Discharge / USGS-01378500-", "60a22a8e61444102b0158d4252c8be39"]} prop={["Discharge, cubic feet", "per second - ft^3/s"]} />
      </div>
    </div>
  );
}

/* ---------- observations window ---------- */

const runs: [number, number][] = [[13, 1.66], [8, 1.65], [3, 1.66], [2, 1.67], [2, 1.68], [1, 1.69], [1, 1.7], [2, 1.71], [2, 1.72], [11, 1.73], [4, 1.74], [2, 1.75], [16, 1.76], [4, 1.75], [1, 1.79]];
const series = runs.flatMap(([n, v]) => Array.from({ length: n }, () => v));
const px = (i: number) => 70 + i * 20.563;
const py = (v: number) => 654 - v * 351.1;

function Chart() {
  return (
    <svg viewBox="0 0 1600 700" className="block h-[700px] w-[1600px] shrink-0" fontFamily="Liberation Sans, Arial, sans-serif" fontSize="24" fill="#666">
      {Array.from({ length: 10 }, (_, i) => (
        <g key={i}>
          <path d={`M50 ${Math.round(py(i * 0.2))}H1530`} stroke={i ? "#e4e4e4" : "#acacac"} strokeWidth="2" />
          <text x="49.500" y={Math.round(py(i * 0.2)) + 8} textAnchor="end">{i ? (i * 0.2).toFixed(1) : "0"}</text>
        </g>
      ))}
      {Array.from({ length: 9 }, (_, i) => (
        <g key={i}>
          <path d={`M${Math.round(px(i * 8))} 22V674`} stroke={i ? "#e4e4e4" : "#acacac"} strokeWidth="2" />
          <text x={px(i * 8)} y="696" textAnchor="middle">{`12/10 ${String(i * 2).padStart(2, "0")}:00`}</text>
        </g>
      ))}
      <polyline points={series.map((v, i) => `${px(i)},${py(v)}`).join(" ")} fill="none" stroke="#32cd32" strokeWidth="2" />
      {series.map((v, i) => <circle key={i} cx={px(i)} cy={py(v)} r="6.800" fill="#32cd32" />)}
    </svg>
  );
}

const btn = "flex h-[72px] shrink-0 items-center justify-center bg-[#ededed] pb-1 text-[#212529]";

function Calendar() {
  return (
    <svg viewBox="0 0 28 30" className="h-[30px] w-7" fill="none">
      <rect x="1.500" y="5" width="25" height="23.500" rx="2" stroke="#212529" strokeWidth="2.600" />
      <path d="M1 4.500h26V11H1z" fill="#212529" />
      <path d="M8 3v5M20 3v5" stroke="#212529" strokeWidth="6" strokeLinecap="round" />
      <path d="M8 3v5M20 3v5" stroke="#ededed" strokeWidth="2" strokeLinecap="round" />
    </svg>
  );
}

function Chevrons({ double, right }: { double?: boolean; right?: boolean }) {
  return (
    <svg viewBox="0 0 18 18" className={right ? "h-[18px] w-[18px] -scale-x-100" : "h-[18px] w-[18px]"} fill="none" stroke="#212529" strokeWidth="2.800">
      {double ? <path d="M9 1.500 2.500 9 9 16.500M16 1.500 9.500 9l6.500 7.500" /> : <path d="M13 1 6 9l7 8" />}
    </svg>
  );
}

function DateField({ className }: { className: string }) {
  return <div className={`flex h-[76px] shrink-0 items-center rounded-l-lg border-2 border-[#ced4da] bg-white pb-[5px] pl-[23px] text-[32px] text-[#495057] ${className}`}>12-10-2023</div>;
}

function ObservationsWindow() {
  return (
    <div className="absolute left-[5px] top-0 flex h-[1257px] w-[1602px] flex-col overflow-hidden rounded-[20px] border border-black bg-white shadow-[0_36px_100px_rgba(0,0,0,0.85)]">
      <div className="relative flex h-[56px] shrink-0 items-center justify-center rounded-t-[19px] border-x border-t-2 border-b-2 border-x-[#6a6a6a] border-t-[#777] border-b-black bg-[#444] pb-1 pr-1 font-[Inter,sans-serif] text-[26.500px] font-semibold text-[#b9b9b9]">
        <div className="absolute left-[15px] top-3 flex gap-4">
          <div className="h-6 w-6 rounded-full bg-[#ee6a5f]" />
          <div className="h-6 w-6 rounded-full bg-[#686868]" />
          <div className="h-6 w-6 rounded-full bg-[#61c555]" />
        </div>
        Observations
      </div>
      <div className="grid h-[307px] shrink-0 grid-cols-[533px_534px_503px] bg-[#f8f9fb] pl-[30px] pt-[15px] text-2xl leading-9 text-[#4a5568]">
        {["Location", "Station"].map((t) => (
          <div key={t}>
            <div className="mb-[22px] text-[39.500px] leading-[48px] text-[#54565c]">{t}</div>
            <div>USGS-01378500</div>
            <div className="mt-5">Stream</div>
          </div>
        ))}
        <div>
          <div className="mb-[22px] whitespace-nowrap text-[40px] leading-[48px] text-[#54565c]">1487ab078be6479aa33b0e259331b67c</div>
          <div>Gage height / USGS-01378500-</div>
          <div>1487ab078be6479aa33b0e259331b67c</div>
          <div className="mt-5">Aug 12 2023 - Dec 10 2023</div>
          <div className="mt-[27px] flex pl-[3px]"><Antenna className="-mt-px mr-[9px]" />USGS_Sensor (ft)</div>
        </div>
      </div>
      <div className="flex h-[72px] shrink-0 text-2xl leading-9">
        <div className="w-[141px] border-b-2 border-[#dee2e6] pl-[34px] pt-4 text-[#918b8b]">Values</div>
        <div className="w-[131px] rounded-t-lg border-x-2 border-t-2 border-[#dee2e6] pl-8 pt-[14px] font-bold text-[#495057]">Chart</div>
        <div className="grow border-b-2 border-[#dee2e6]" />
      </div>
      <Chart />
      <div className="flex h-[91px] shrink-0 items-center bg-[#f8f9fb] pl-8 text-[28px] text-[#666]">
        <div className="w-[177px] shrink-0 pb-[7px]">Aug 12 2023</div>
        <div className={`${btn} w-12 rounded-lg`}><Chevrons double /></div>
        <div className={`${btn} ml-1 w-[42px] rounded-lg`}><Chevrons /></div>
        <DateField className="ml-1.5 w-[231px]" />
        <div className="-ml-px flex h-[76px] w-[61px] shrink-0 items-center justify-center rounded-r-lg border-2 border-[#dee2e6] bg-[#ededed] pb-1.5 pr-px"><Calendar /></div>
        <DateField className="ml-[9px] w-[228px]" />
        <div className={`${btn} w-[61px] rounded-r-lg border-2 border-l-0 border-[#dee2e6]`}><Calendar /></div>
        <div className={`${btn} ml-[9px] w-[42px] rounded-lg`}><Chevrons right /></div>
        <div className={`${btn} ml-1 w-12 rounded-lg`}><Chevrons double right /></div>
        <div className="ml-[18px] w-[176px] shrink-0 pb-[7px]">Dec 10 2023</div>
        <div className={`${btn} w-14 rounded-lg`}><FaSyncAlt size={24} /></div>
        <div className={`${btn} ml-1 w-[58px] rounded-lg`}><FaDownload size={27} /></div>
      </div>
      <div className="flex h-[29px] shrink-0 rounded-b-[19px] border-b-2 border-t-2 border-b-[#707070] border-t-[#1c1c1c] bg-[#383838]">
        <div className="flex w-[25px] items-center justify-center border border-[#5a5a5a]"><div className="h-0 w-0 border-y-8 border-r-8 border-y-transparent border-r-[#bcbcbc]" /></div>
        <div className="ml-[3px] w-[1327px] border border-[#565656] bg-[#404040]" />
        <div className="ml-auto flex w-[27px] items-center justify-center border border-[#5a5a5a]"><div className="h-0 w-0 border-y-8 border-l-8 border-y-transparent border-l-[#bcbcbc]" /></div>
      </div>
    </div>
  );
}

/* ---------- desktop ---------- */

const sideText: [string, string][] = [
  ["mt-[104px]", "A"], ["mt-1", "S"], ["mt-[42px]", "M"], ["mt-[112px]", "l"], ["mt-1.5", "s"], ["mt-1.5", "e"], ["mt-1.5", "e"], ["mt-1.5", "er"], ["mt-1.5", "s"], ["mt-[40px]", "G"], ["mt-[44px]", "E"], ["mt-[128px]", "t"], ["mt-[10px]", "n"],
];

export default function App() {
  return (
    <div className="relative h-[1768px] w-[2454px] overflow-hidden bg-[#1e1e1e] font-['Liberation_Sans',Arial,sans-serif]">
      <div className="flex h-full flex-col">
        <Toolbars />
        <div className="flex h-[1382px] shrink-0">
          <div className="w-[1600px] overflow-hidden text-[26px] leading-[30px] text-[#f5f5f5]">
            {sideText.map(([m, t], i) => <div key={i} className={`${m} -ml-2`}>{t}</div>)}
          </div>
          <MapCanvas />
        </div>
        <div className="h-[52px] shrink-0" />
        <div className="flex h-[62px] shrink-0 items-center border-b-2 border-t border-b-[#5f5b5f] border-t-[#2a2a2a] bg-[#323232]">
          <div className="flex h-12 w-[240px] items-center overflow-hidden rounded-r-md border-2 border-[#272727] bg-[#1e1e1e] font-[Inter,'DejaVu_Sans',sans-serif] text-[24.500px] tracking-[-0.4px] text-[#8c8c8c]">
            <span className="-ml-1.5 whitespace-pre pt-[3px]">cate (⌘K)</span>
          </div>
        </div>
      </div>

      <StationsWindow />
      <ObservationsWindow />

      <svg viewBox="0 0 2454 1768" className="absolute left-0 top-0 h-[1768px] w-[2454px]" fill="none" stroke="#ec4325">
        <path d="M1644 720C1925 716 2125 860 2214 1144" strokeWidth="5" />
        <path d="m1620 719 25-12v25z" fill="#ec4325" stroke="none" />
        <rect x="2201" y="1192.500" width="126" height="119" strokeWidth="5" />
      </svg>
    </div>
  );
}
